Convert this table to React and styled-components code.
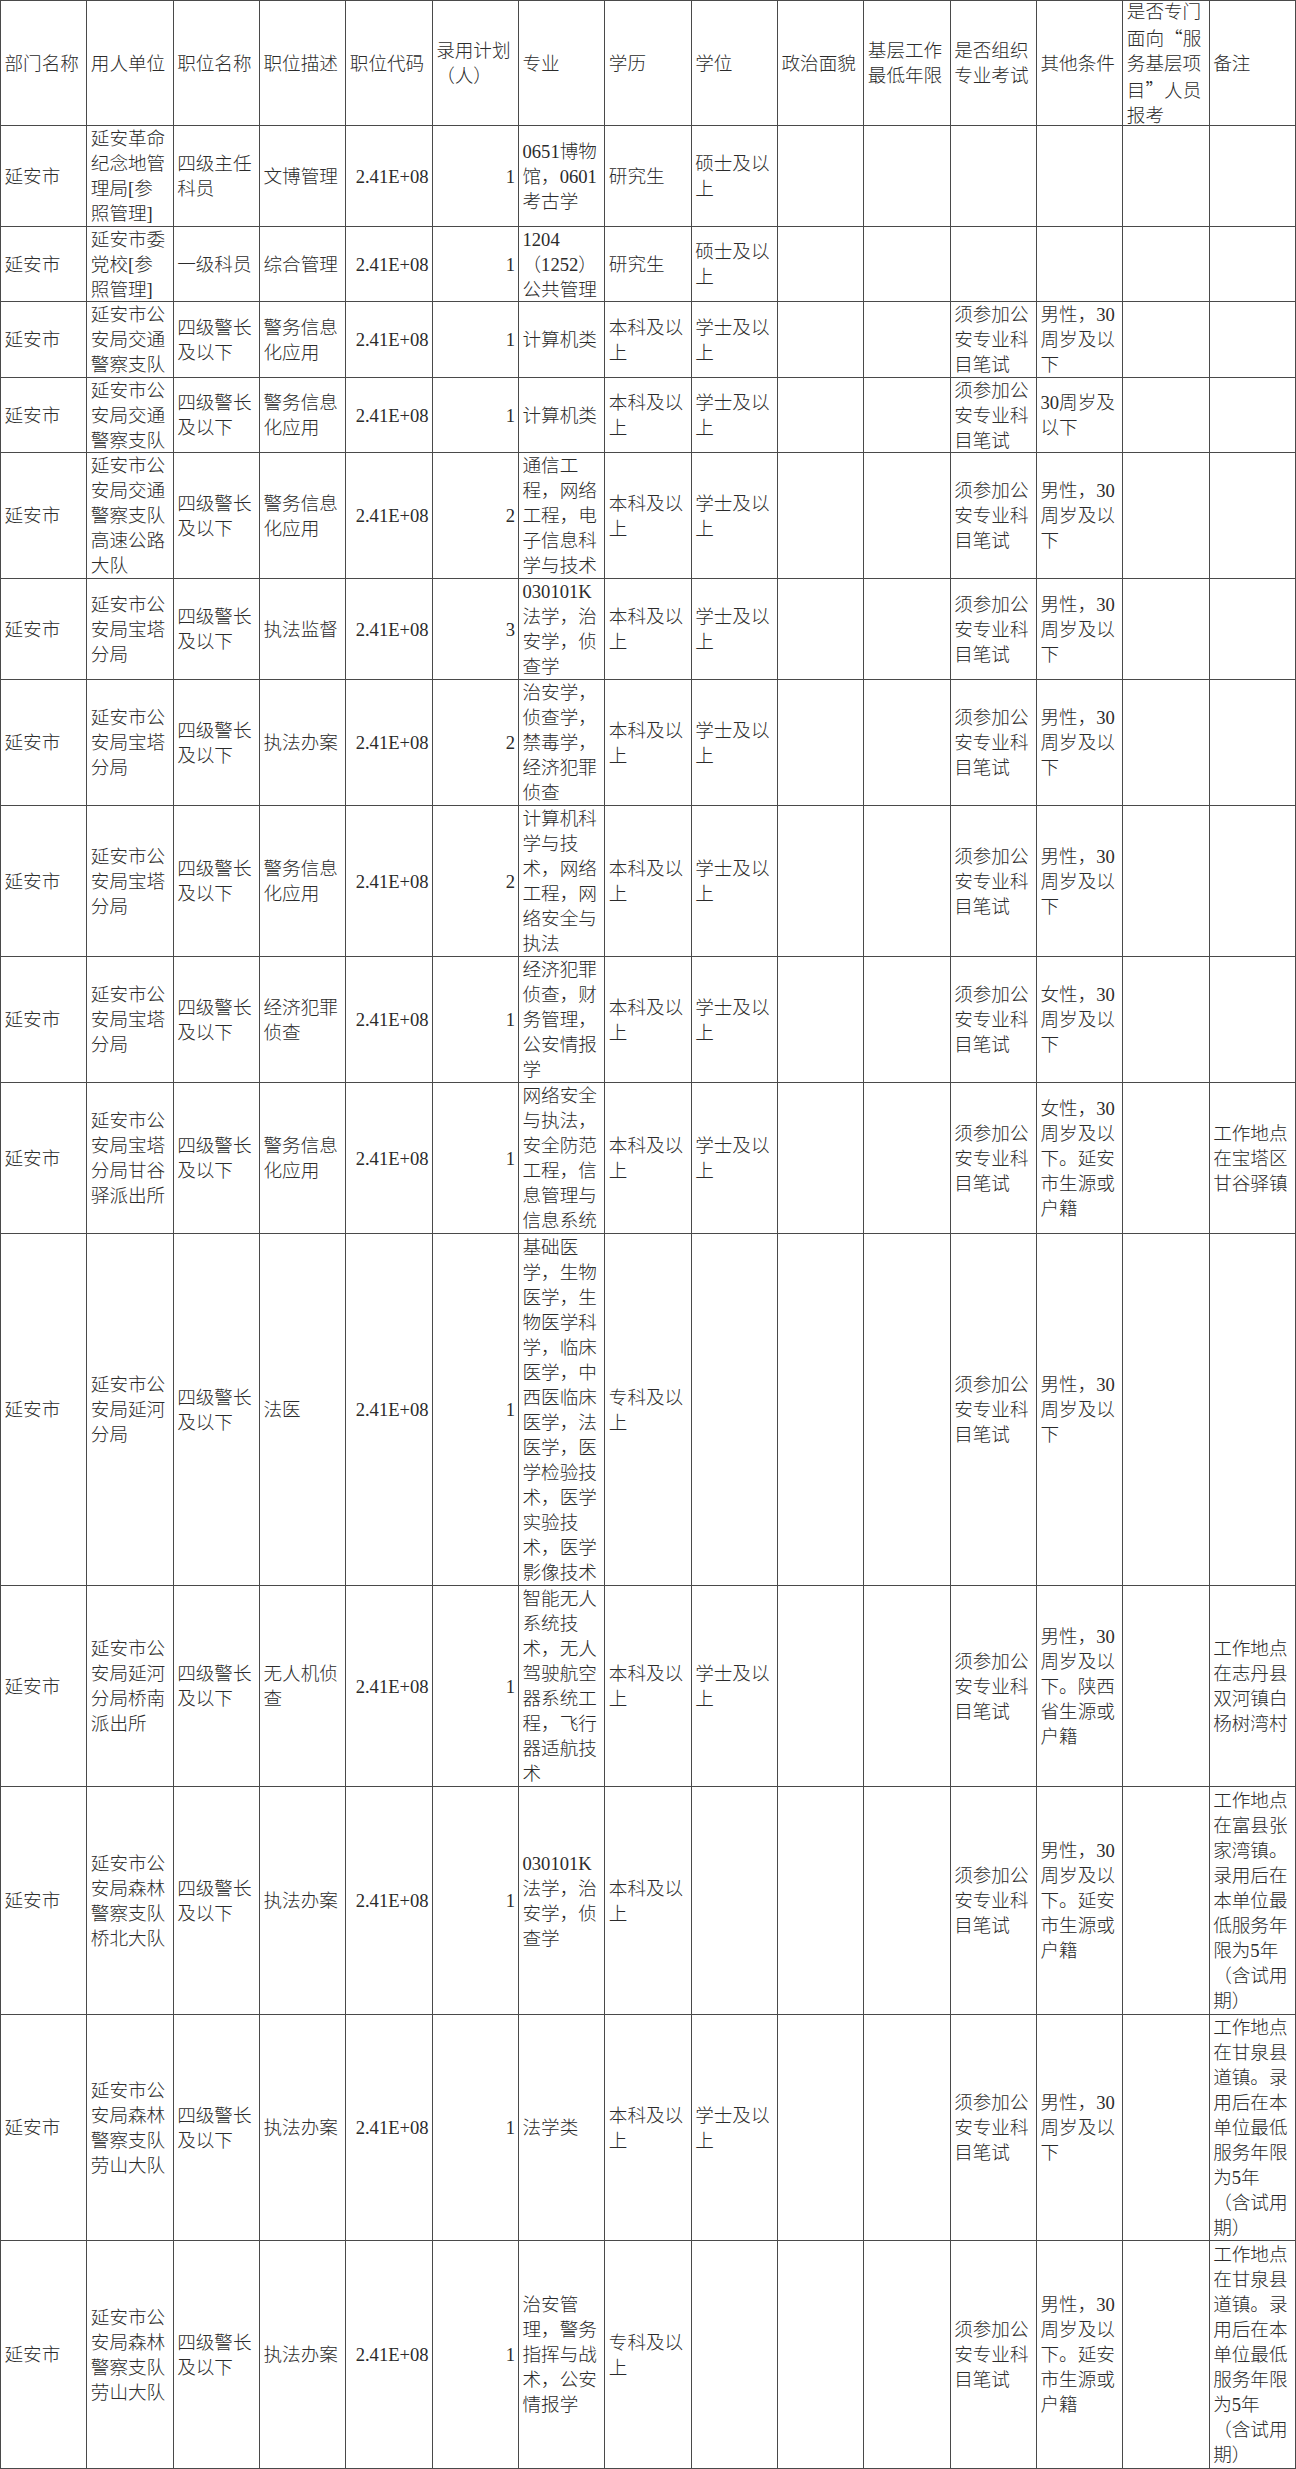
import React from "react";
import styled, { createGlobalStyle } from "styled-components";

const GlobalStyle = createGlobalStyle`
  html, body {
    margin: 0;
    padding: 0;
    background: #ffffff;
  }
  * {
    box-sizing: border-box;
  }
`;

const Styled = {
  Sheet: styled.div`
    width: 1296px;
    border-top: 1px solid #4a4a4a;
    border-left: 1px solid #4a4a4a;
    font-family: "Liberation Serif", "Noto Sans CJK SC", serif;
    font-size: 18.6px;
    font-weight: 300;
    line-height: 25px;
    color: #2b2b2b;
  `,
  Row: styled.div`
    display: grid;
    grid-template-columns: repeat(15, 1fr);
    height: ${(p) => p.$h}px;
  `,
  Cell: styled.div`
    display: flex;
    align-items: center;
    justify-content: ${(p) => (p.$num ? "flex-end" : "flex-start")};
    padding: 0 ${(p) => (p.$num ? "3px" : "0")} 0 ${(p) => (p.$num ? "0" : "3.5px")};
    border-right: 1px solid #4a4a4a;
    border-bottom: 1px solid #4a4a4a;
    white-space: pre-line;
    overflow: hidden;
  `,
  Quote: styled.span`
    font-family: "Noto Sans CJK SC", sans-serif;
    font-feature-settings: "fwid";
  `,
};

const headers = [
  "部门名称",
  "用人单位",
  "职位名称",
  "职位描述",
  "职位代码",
  "录用计划\n（人）",
  "专业",
  "学历",
  "学位",
  "政治面貌",
  "基层工作\n最低年限",
  "是否组织\n专业考试",
  "其他条件",
  null,
  "备注",
];

const CODE = "2.41E+08";
const EXAM = "须参加公\n安专业科\n目笔试";
const RANK = "四级警长\n及以下";
const BK = "本科及以\n上";
const ZK = "专科及以\n上";
const XS = "学士及以\n上";
const MALE = "男性，30\n周岁及以\n下";
const FEMALE = "女性，30\n周岁及以\n下";
const MALE_YA = "男性，30\n周岁及以\n下。延安\n市生源或\n户籍";
const GANQUAN = "工作地点\n在甘泉县\n道镇。录\n用后在本\n单位最低\n服务年限\n为5年\n（含试用\n期）";
const BAOTA = "延安市公\n安局宝塔\n分局";
const LAOSHAN = "延安市公\n安局森林\n警察支队\n劳山大队";

// 每行：用人单位、职位名称、职位描述、计划人数、专业、学历、学位、考试、其他条件、备注
const rows = [
  { h: 101, unit: "延安革命\n纪念地管\n理局[参\n照管理]", title: "四级主任\n科员", desc: "文博管理", plan: 1, major: "0651博物\n馆，0601\n考古学", edu: "研究生", degree: "硕士及以\n上", exam: "", other: "", note: "" },
  { h: 75, unit: "延安市委\n党校[参\n照管理]", title: "一级科员", desc: "综合管理", plan: 1, major: "1204\n（1252）\n公共管理", edu: "研究生", degree: "硕士及以\n上", exam: "", other: "", note: "" },
  { h: 76, unit: "延安市公\n安局交通\n警察支队", title: RANK, desc: "警务信息\n化应用", plan: 1, major: "计算机类", edu: BK, degree: XS, exam: EXAM, other: MALE, note: "" },
  { h: 75, unit: "延安市公\n安局交通\n警察支队", title: RANK, desc: "警务信息\n化应用", plan: 1, major: "计算机类", edu: BK, degree: XS, exam: EXAM, other: "30周岁及\n以下", note: "" },
  { h: 126, unit: "延安市公\n安局交通\n警察支队\n高速公路\n大队", title: RANK, desc: "警务信息\n化应用", plan: 2, major: "通信工\n程，网络\n工程，电\n子信息科\n学与技术", edu: BK, degree: XS, exam: EXAM, other: MALE, note: "" },
  { h: 101, unit: BAOTA, title: RANK, desc: "执法监督", plan: 3, major: "030101K\n法学，治\n安学，侦\n查学", edu: BK, degree: XS, exam: EXAM, other: MALE, note: "" },
  { h: 126, unit: BAOTA, title: RANK, desc: "执法办案", plan: 2, major: "治安学，\n侦查学，\n禁毒学，\n经济犯罪\n侦查", edu: BK, degree: XS, exam: EXAM, other: MALE, note: "" },
  { h: 151, unit: BAOTA, title: RANK, desc: "警务信息\n化应用", plan: 2, major: "计算机科\n学与技\n术，网络\n工程，网\n络安全与\n执法", edu: BK, degree: XS, exam: EXAM, other: MALE, note: "" },
  { h: 126, unit: BAOTA, title: RANK, desc: "经济犯罪\n侦查", plan: 1, major: "经济犯罪\n侦查，财\n务管理，\n公安情报\n学", edu: BK, degree: XS, exam: EXAM, other: FEMALE, note: "" },
  { h: 151, unit: "延安市公\n安局宝塔\n分局甘谷\n驿派出所", title: RANK, desc: "警务信息\n化应用", plan: 1, major: "网络安全\n与执法，\n安全防范\n工程，信\n息管理与\n信息系统", edu: BK, degree: XS, exam: EXAM, other: "女性，30\n周岁及以\n下。延安\n市生源或\n户籍", note: "工作地点\n在宝塔区\n甘谷驿镇" },
  { h: 352, unit: "延安市公\n安局延河\n分局", title: RANK, desc: "法医", plan: 1, major: "基础医\n学，生物\n医学，生\n物医学科\n学，临床\n医学，中\n西医临床\n医学，法\n医学，医\n学检验技\n术，医学\n实验技\n术，医学\n影像技术", edu: ZK, degree: "", exam: EXAM, other: MALE, note: "" },
  { h: 201, unit: "延安市公\n安局延河\n分局桥南\n派出所", title: RANK, desc: "无人机侦\n查", plan: 1, major: "智能无人\n系统技\n术，无人\n驾驶航空\n器系统工\n程，飞行\n器适航技\n术", edu: BK, degree: XS, exam: EXAM, other: "男性，30\n周岁及以\n下。陕西\n省生源或\n户籍", note: "工作地点\n在志丹县\n双河镇白\n杨树湾村" },
  { h: 228, unit: "延安市公\n安局森林\n警察支队\n桥北大队", title: RANK, desc: "执法办案", plan: 1, major: "030101K\n法学，治\n安学，侦\n查学", edu: BK, degree: "", exam: EXAM, other: MALE_YA, note: "工作地点\n在富县张\n家湾镇。\n录用后在\n本单位最\n低服务年\n限为5年\n（含试用\n期）" },
  { h: 226, unit: LAOSHAN, title: RANK, desc: "执法办案", plan: 1, major: "法学类", edu: BK, degree: XS, exam: EXAM, other: MALE, note: GANQUAN },
  { h: 228, unit: LAOSHAN, title: RANK, desc: "执法办案", plan: 1, major: "治安管\n理，警务\n指挥与战\n术，公安\n情报学", edu: ZK, degree: "", exam: EXAM, other: MALE_YA, note: GANQUAN },
];

const ServeHeader = () => (
  <Styled.Cell>
    <span>
      是否专门{"\n"}面向<Styled.Quote>“</Styled.Quote>服{"\n"}务基层项{"\n"}目<Styled.Quote>”</Styled.Quote>人员{"\n"}报考
    </span>
  </Styled.Cell>
);

const App = () => {
  return (
    <>
      <GlobalStyle />
      <Styled.Sheet>
        <Styled.Row $h={125}>
          {headers.map((text, i) =>
            text === null ? <ServeHeader key={i} /> : <Styled.Cell key={i}>{text}</Styled.Cell>
          )}
        </Styled.Row>
        {rows.map((r, i) => (
          <Styled.Row key={i} $h={r.h}>
            <Styled.Cell>延安市</Styled.Cell>
            <Styled.Cell>{r.unit}</Styled.Cell>
            <Styled.Cell>{r.title}</Styled.Cell>
            <Styled.Cell>{r.desc}</Styled.Cell>
            <Styled.Cell $num>{CODE}</Styled.Cell>
            <Styled.Cell $num>{r.plan}</Styled.Cell>
            <Styled.Cell>{r.major}</Styled.Cell>
            <Styled.Cell>{r.edu}</Styled.Cell>
            <Styled.Cell>{r.degree}</Styled.Cell>
            <Styled.Cell />
            <Styled.Cell />
            <Styled.Cell>{r.exam}</Styled.Cell>
            <Styled.Cell>{r.other}</Styled.Cell>
            <Styled.Cell />
            <Styled.Cell>{r.note}</Styled.Cell>
          </Styled.Row>
        ))}
      </Styled.Sheet>
    </>
  );
};

export default App;
